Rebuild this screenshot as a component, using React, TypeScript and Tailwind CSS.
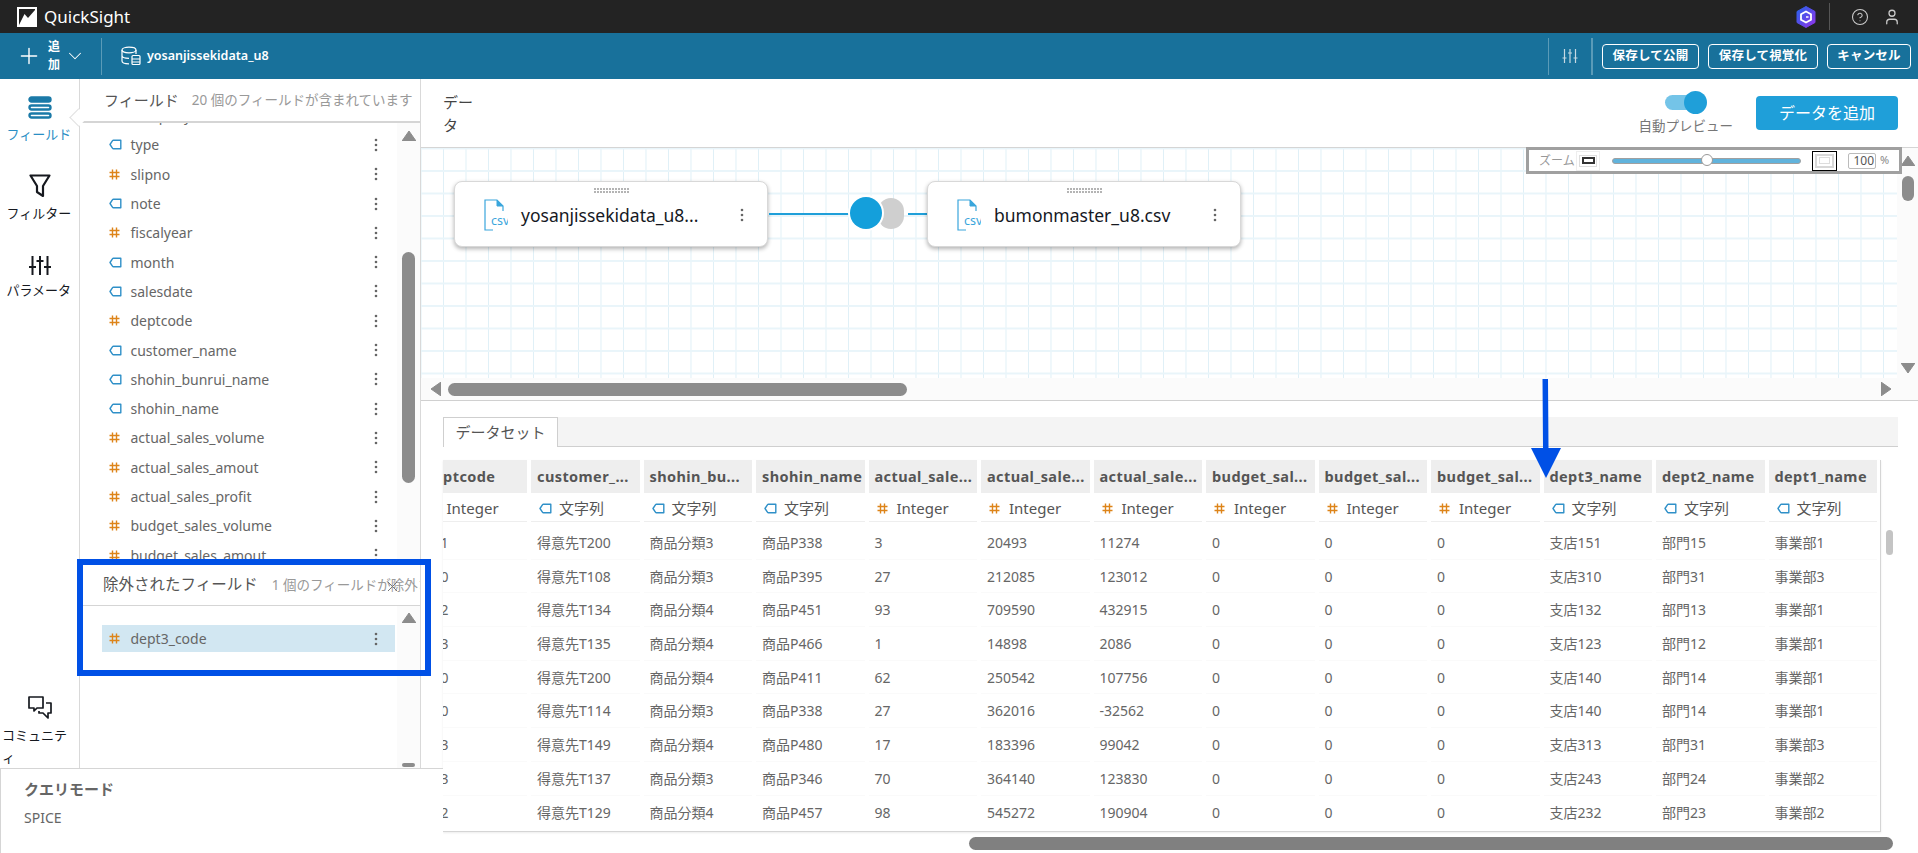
import { Plus, ChevronDown, CircleHelp, User } from 'lucide-react'

const font = 'font-["Noto_Sans","Noto_Sans_CJK_JP",sans-serif]'

const fields: { name: string; kind: 's' | 'n' }[] = [
  { name: 'company', kind: 's' },
  { name: 'type', kind: 's' },
  { name: 'slipno', kind: 'n' },
  { name: 'note', kind: 's' },
  { name: 'fiscalyear', kind: 'n' },
  { name: 'month', kind: 's' },
  { name: 'salesdate', kind: 's' },
  { name: 'deptcode', kind: 'n' },
  { name: 'customer_name', kind: 's' },
  { name: 'shohin_bunrui_name', kind: 's' },
  { name: 'shohin_name', kind: 's' },
  { name: 'actual_sales_volume', kind: 'n' },
  { name: 'actual_sales_amout', kind: 'n' },
  { name: 'actual_sales_profit', kind: 'n' },
  { name: 'budget_sales_volume', kind: 'n' },
  { name: 'budget_sales_amout', kind: 'n' },
]

const columns: { head: string; kind: 's' | 'n' }[] = [
  { head: 'deptcode', kind: 'n' },
  { head: 'customer_...', kind: 's' },
  { head: 'shohin_bu...', kind: 's' },
  { head: 'shohin_name', kind: 's' },
  { head: 'actual_sale...', kind: 'n' },
  { head: 'actual_sale...', kind: 'n' },
  { head: 'actual_sale...', kind: 'n' },
  { head: 'budget_sal...', kind: 'n' },
  { head: 'budget_sal...', kind: 'n' },
  { head: 'budget_sal...', kind: 'n' },
  { head: 'dept3_name', kind: 's' },
  { head: 'dept2_name', kind: 's' },
  { head: 'dept1_name', kind: 's' },
]

const rows = [
  ['151', '得意先T200', '商品分類3', '商品P338', '3', '20493', '11274', '0', '0', '0', '支店151', '部門15', '事業部1'],
  ['310', '得意先T108', '商品分類3', '商品P395', '27', '212085', '123012', '0', '0', '0', '支店310', '部門31', '事業部3'],
  ['132', '得意先T134', '商品分類4', '商品P451', '93', '709590', '432915', '0', '0', '0', '支店132', '部門13', '事業部1'],
  ['123', '得意先T135', '商品分類4', '商品P466', '1', '14898', '2086', '0', '0', '0', '支店123', '部門12', '事業部1'],
  ['140', '得意先T200', '商品分類4', '商品P411', '62', '250542', '107756', '0', '0', '0', '支店140', '部門14', '事業部1'],
  ['140', '得意先T114', '商品分類3', '商品P338', '27', '362016', '-32562', '0', '0', '0', '支店140', '部門14', '事業部1'],
  ['313', '得意先T149', '商品分類4', '商品P480', '17', '183396', '99042', '0', '0', '0', '支店313', '部門31', '事業部3'],
  ['243', '得意先T137', '商品分類3', '商品P346', '70', '364140', '123830', '0', '0', '0', '支店243', '部門24', '事業部2'],
  ['232', '得意先T129', '商品分類4', '商品P457', '98', '545272', '190904', '0', '0', '0', '支店232', '部門23', '事業部2'],
]

function TagIcon() {
  return (
    <svg width="13" height="11" viewBox="0 0 13 11" fill="none" className="shrink-0">
      <path d="M1 5.5 3.6 1.6c.2-.3.4-.4.8-.4h7.4v8.6H4.4c-.4 0-.6-.1-.8-.4L1 5.5Z" stroke="#2f90c8" strokeWidth="1.4" strokeLinejoin="round" />
    </svg>
  )
}

function HashIcon() {
  return (
    <svg width="11" height="11" viewBox="0 0 11 11" fill="none" className="shrink-0">
      <path d="M3.5 .5v10M7.5 .5v10M.5 3.5h10M.5 7.5h10" stroke="#dd8419" strokeWidth="1.4" />
    </svg>
  )
}

function Kind({ kind }: { kind: 's' | 'n' }) {
  return kind === 's' ? <TagIcon /> : <HashIcon />
}

function Dots({ className }: { className?: string }) {
  return (
    <svg width="4" height="14" viewBox="0 0 4 14" className={className}>
      <circle cx="2" cy="2" r="1.3" fill="#666" />
      <circle cx="2" cy="7" r="1.3" fill="#666" />
      <circle cx="2" cy="12" r="1.3" fill="#666" />
    </svg>
  )
}

function Triangle({ dir = 'up' }: { dir?: 'up' | 'down' | 'left' | 'right' }) {
  const d = { up: 'M7 0 14 10H0Z', down: 'M0 0H14L7 10Z', left: 'M10 0V14L0 7Z', right: 'M0 0 10 7 0 14Z' }[dir]
  const v = dir === 'up' || dir === 'down'
  return (
    <svg width={v ? 14 : 10} height={v ? 10 : 14} viewBox={v ? '0 0 14 10' : '0 0 10 14'} className="shrink-0">
      <path d={d} fill="#8c8c8c" stroke="#8c8c8c" strokeWidth="1" strokeLinejoin="round" />
    </svg>
  )
}

function CsvIcon() {
  return (
    <svg width="24" height="32" viewBox="0 0 24 32" fill="none" className="shrink-0">
      <path d="M1 17V1h12l6 6v5" stroke="#3aa6dc" strokeWidth="1.2" />
      <path d="M13 1v6h6Z" fill="#3aa6dc" stroke="#3aa6dc" />
      <path d="M1 17v14h8" stroke="#3aa6dc" strokeWidth="1.2" />
      <text x="7" y="26" fontSize="12.5" fill="#3aa6dc" fontFamily="Noto Sans">csv</text>
    </svg>
  )
}

function Handle() {
  return (
    <div className="grid grid-cols-[repeat(12,2px)] gap-px w-fit mx-auto pt-[6px]">
      {Array.from({ length: 24 }).map((_, i) => (
        <span key={i} className="w-[2px] h-[2px] bg-[#b4b4b4]" />
      ))}
    </div>
  )
}

function NodeCard({ name, className }: { name: string; className: string }) {
  return (
    <div className={`absolute top-[33px] w-[314px] h-[66px] rounded-lg bg-white border border-[#d8d8d8] shadow-[0_2px_4px_rgba(0,0,0,0.3)] ${className}`}>
      <Handle />
      <div className="flex items-center pl-[29px] pr-[23px] mt-[6px]">
        <CsvIcon />
        <span className="ml-[13px] text-[17.5px] text-[#16191f] whitespace-nowrap flex-1">{name}</span>
        <Dots />
      </div>
    </div>
  )
}

function FieldRow({ name, kind, active }: { name: string; kind: 's' | 'n'; active?: boolean }) {
  return (
    <div className={`flex items-center ml-[22px] w-[293px] pl-[7px] pr-[17px] ${active ? 'h-[27px] bg-[#d2e7f2]' : 'h-[29.3px] shrink-0'}`}>
      <span className="w-[21.5px] flex"><Kind kind={kind} /></span>
      <span className="text-[14px] text-[#666] flex-1">{name}</span>
      <Dots />
    </div>
  )
}

function RailItem({ label, active, children, className = '' }: { label: string; active?: boolean; children: React.ReactNode; className?: string }) {
  return (
    <div className={`flex flex-col items-center ${className}`}>
      {children}
      <span className={`w-[66px] text-[13px] leading-[22px] mt-[4px] ${active ? 'text-[#2a8ec4]' : 'text-[#16191f]'}`}>{label}</span>
    </div>
  )
}

export default function App() {
  return (
    <div className={`${font} relative w-[1918px] h-[853px] overflow-hidden bg-white flex flex-col`}>
      {/* top bar */}
      <div className="h-[33px] bg-[#232323] flex items-center shrink-0">
        <svg width="20" height="20" viewBox="0 0 20 20" className="ml-[17px]">
          <rect width="20" height="20" fill="#fff" />
          <path d="M2 2h16v1L11 11 7.500 7 2 18Z" fill="#232323" />
        </svg>
        <span className="ml-[7px] text-[17px] text-white">QuickSight</span>
        <svg width="20" height="22" viewBox="0 0 20 22" className="ml-auto">
          <defs>
            <linearGradient id="hx" x1="0" y1="0" x2="1" y2="1">
              <stop offset="0" stopColor="#2563eb" />
              <stop offset="1" stopColor="#9333ea" />
            </linearGradient>
          </defs>
          <path d="M10 .5 19 5.500v11L10 21.500 1 16.500v-11Z" fill="url(#hx)" stroke="url(#hx)" strokeLinejoin="round" />
          <path d="M10 5.500 15 8.300v5.400L10 16.500 5 13.700V8.300Z" fill="none" stroke="#fff" strokeWidth="1.800" />
          <path d="M10 11h2.500" stroke="#fff" strokeWidth="1.500" />
        </svg>
        <div className="w-px h-[27px] bg-[#555] ml-[13px]" />
        <CircleHelp size={18} strokeWidth={1.4} className="text-[#ccc] ml-[21px]" />
        <User size={18} strokeWidth={1.7} className="text-[#ccc] ml-[14px] mr-[17px]" />
      </div>

      {/* toolbar */}
      <div className="h-[46px] bg-[#18719b] flex items-center shrink-0 text-white">
        <Plus size={26} strokeWidth={1.3} className="ml-[16px]" />
        <span className="ml-[5px] w-[14px] text-[12px] leading-[18px] font-bold text-center">追加</span>
        <ChevronDown size={22} strokeWidth={1.1} className="ml-[2.500px]" />
        <div className="w-px h-[37px] bg-[#5a9bb8] ml-[15.500px]" />
        <svg width="20" height="20" viewBox="0 0 20 20" fill="none" stroke="#fff" strokeWidth="1.2" className="ml-[19px]">
          <ellipse cx="8" cy="4" rx="7" ry="2.8" />
          <path d="M1 4v11c0 1.5 3 2.8 7 2.8M1 9.500c0 1.500 3 2.800 7 2.800M15 4v4" />
          <rect x="11" y="9.500" width="8" height="9" rx="1" />
          <path d="M11 13h8M11 16h8" />
        </svg>
        <span className="ml-[6px] text-[12.500px] font-semibold">yosanjissekidata_u8</span>
        <div className="ml-auto w-px h-[37px] bg-[#5a9bb8]" />
        <svg width="16" height="14" viewBox="0 0 16 14" fill="none" stroke="#c6d9e3" strokeWidth="1.2" className="mx-[13px]">
          <path d="M2.500 0v14M8 0v14M13.500 0v14M.5 9h4M6 4h4M11.500 9h4" />
        </svg>
        <div className="w-[2px] h-[37px] bg-[#5a9bb8]" />
        <button className="ml-[9px] w-[97px] h-[25px] rounded border border-white text-[12.5px] font-bold tracking-[0.2px]">保存して公開</button>
        <button className="ml-[9px] w-[110px] h-[25px] rounded border border-white text-[12.5px] font-bold tracking-[0.2px]">保存して視覚化</button>
        <button className="ml-[9px] w-[84px] h-[25px] rounded border border-white text-[12.5px] font-bold tracking-[0.2px] mr-[7px]">キャンセル</button>
      </div>

      <div className="flex flex-1 min-h-0">
        {/* rail */}
        <div className="relative w-[80px] h-[689px] border-r border-[#d9d9d9] shrink-0 flex flex-col pt-[17px]">
          <RailItem label="フィールド" active>
            <svg width="24" height="23" viewBox="0 0 24 23" fill="none" stroke="#1b7aa8" strokeWidth="2.4">
              <rect x="1.500" y="1.500" width="21" height="4" rx="2" fill="#1b7aa8" />
              <rect x="1.500" y="9.500" width="21" height="4" rx="2" />
              <rect x="1.500" y="17.500" width="21" height="4" rx="2" />
            </svg>
          </RailItem>
          <RailItem label="フィルター" className="mt-[29px]">
            <svg width="22" height="24" viewBox="0 0 22 24" fill="none" stroke="#16191f" strokeWidth="2.200" strokeLinejoin="round">
              <path d="M1.500 1.500h19L14 12v10l-6-4v-6Z" />
            </svg>
          </RailItem>
          <RailItem label="パラメータ" className="mt-[32px]">
            <svg width="22" height="19" viewBox="0 0 22 19" fill="none" stroke="#16191f" strokeWidth="2">
              <path d="M3.500 0v19M11 0v19M18.500 0v19M0 11h7M7.500 5h7M15 11h7" />
            </svg>
          </RailItem>
          <RailItem label="コミュニティ" className="mt-auto items-start! pl-[2px]">
            <svg width="24" height="24" viewBox="0 0 24 24" fill="none" stroke="#16191f" strokeWidth="1.7" strokeLinejoin="round" className="ml-[26px]">
              <path d="M1 1h14v11H9l-3 3v-3H1Z" />
              <path d="M18 7h5v10h-3v5l-5-5h-4v-2" />
            </svg>
          </RailItem>
          <div className="absolute right-[-1px] top-[32px] w-[13px] h-[13px] bg-white border-l border-b border-[#e0e0e0] rotate-45 translate-x-[5px]" />
        </div>

        {/* fields panel */}
        <div className="w-[341px] h-[689px] shrink-0 border-r border-[#d9d9d9] flex flex-col overflow-hidden">
          <div className="h-[44px] shrink-0 border-b-2 border-[#d5d5d5] flex items-center pl-[24px] whitespace-nowrap">
            <span className="text-[15px] text-[#555]">フィールド</span>
            <span className="ml-[13px] text-[13.500px] text-[#999]">20 個のフィールドが含まれています</span>
          </div>
          <div className="h-[442px] shrink-0 flex overflow-hidden">
            <div className="flex-1 flex flex-col -mt-[22px]">
              {fields.map(f => <FieldRow key={f.name} name={f.name} kind={f.kind} />)}
            </div>
            <div className="w-[23px] shrink-0 bg-[#fbfbfb] flex flex-col items-center pt-[8px]">
              <Triangle />
              <div className="mt-[111px] w-[13px] h-[231px] rounded-full bg-[#8c8c8c]" />
            </div>
          </div>
          <div className="flex-1 flex flex-col min-h-0">
            <div className="relative h-[41px] shrink-0 border-b border-[#d5d5d5] flex items-center pl-[23px] whitespace-nowrap overflow-hidden">
              <span className="shrink-0 text-[15.500px] text-[#555]">除外されたフィールド</span>
              <span className="shrink-0 ml-[14px] text-[13.500px] text-[#999]">1 個のフィールドが除外されています</span>
              <svg width="11" height="11" viewBox="0 0 11 11" className="absolute left-[307px] top-[16px]">
                <path d="M1 1l9 9M10 1l-9 9" stroke="#777" strokeWidth="1" />
              </svg>
            </div>
            <div className="flex flex-1">
              <div className="flex-1 pt-[19px]">
                <FieldRow name="dept3_code" kind="n" active />
              </div>
              <div className="w-[23px] shrink-0 bg-[#fbfbfb] flex flex-col items-center pt-[7px]">
                <Triangle />
                <div className="mt-auto mb-px w-[13px] h-[4px] rounded-full bg-[#8c8c8c]" />
              </div>
            </div>
          </div>
        </div>

        {/* main */}
        <div className="flex-1 min-w-0 flex flex-col">
          <div className="h-[69px] shrink-0 border-b border-[#d5d5d5] flex">
            <span className="ml-[22px] mt-[12px] w-[30px] text-[15px] leading-[23px] text-[#444]">データ</span>
            <div className="ml-auto mt-[13px] flex flex-col items-center">
              <div className="relative w-[42px] h-[21px] flex items-center">
                <div className="w-[38px] h-[15px] rounded-full bg-[#74c4e8]" />
                <div className="absolute right-0 w-[23px] h-[23px] rounded-full bg-[#1f9fd9]" />
              </div>
              <span className="mt-[3px] text-[13.500px] text-[#777]">自動プレビュー</span>
            </div>
            <button className="mt-[17px] ml-[23px] mr-[20px] w-[142px] h-[34px] rounded-sm bg-[#1f9fd9] text-white text-[16px]">データを追加</button>
          </div>

          <div className="h-[253px] shrink-0 border-b border-[#d0d0d0] flex">
            <div className="flex-1 min-w-0 flex flex-col">
              <div className="relative flex-1 bg-[linear-gradient(#e9f5fa_2px,transparent_2px),linear-gradient(90deg,#e0f0f7_1px,transparent_1px)] bg-size-[22.5px_22.5px] bg-position-[22px_22px]">
                <NodeCard name="yosanjissekidata_u8..." className="left-[33px]" />
                <div className="absolute left-[348px] top-[65px] w-[80px] h-[2px] bg-[#1f9fd9]" />
                <div className="absolute left-[487px] top-[65px] w-[19px] h-[2px] bg-[#1f9fd9]" />
                <div className="absolute left-[457px] top-[50px] w-[26px] h-[31px] rounded-full bg-[#cfcfcf]" />
                <div className="absolute left-[429px] top-[49px] w-[32px] h-[32px] rounded-full bg-[#149fdb] ring-2 ring-white" />
                <NodeCard name="bumonmaster_u8.csv" className="left-[506px]" />
                <div className="absolute left-[1105px] -top-px w-[376px] h-[27px] border-[3px] border-[#a0a0a0] bg-white flex items-center pl-[10px]">
                  <span className="text-[12px] text-[#999] w-[34px] whitespace-nowrap">ズーム</span>
                  <div className="ml-[3px] w-[24px] h-[20px] border border-[#eee] flex items-center justify-center">
                    <div className="w-[18px] h-[12px] border border-[#ddd] flex items-center justify-center">
                      <div className="w-[13px] h-[7px] border-2 border-[#333]" />
                    </div>
                  </div>
                  <div className="relative ml-[12px] w-[189px] h-[6px] rounded-full bg-[#61b3dc] border border-[#a0a0a0]">
                    <div className="absolute left-[88px] -top-[5px] w-[12px] h-[12px] rounded-full bg-white border border-[#999]" />
                  </div>
                  <div className="ml-[11px] w-[25px] h-[20px] border border-black flex items-center justify-center">
                    <div className="w-[19px] h-[14px] border-2 border-[#d8d8d8] flex items-center justify-center">
                      <div className="w-[11px] h-[7px] border border-[#ddd]" />
                    </div>
                  </div>
                  <div className="ml-[11px] w-[28px] h-[16px] border border-[#bbb] rounded-[2px] text-[12px] leading-[14px] text-right pr-px text-[#555]">100</div>
                  <span className="ml-[4px] text-[11px] text-[#888]">%</span>
                </div>
              </div>
              <div className="h-[22px] shrink-0 bg-[#fbfbfb] flex items-center pl-[10px]">
                <Triangle dir="left" />
                <div className="ml-[7px] w-[459px] h-[13px] rounded-full bg-[#8c8c8c]" />
                <div className="ml-auto mr-[6px]"><Triangle dir="right" /></div>
              </div>
            </div>
            <div className="w-[21px] shrink-0 bg-[#fbfbfb] flex flex-col items-center pt-[8px]">
              <Triangle />
              <div className="mt-[10px] w-[12px] h-[25px] rounded-full bg-[#8c8c8c]" />
              <div className="mt-[162px]"><Triangle dir="down" /></div>
            </div>
          </div>

          {/* dataset preview */}
          <div className="flex-1 min-h-0 pl-[22px] pt-[16px] flex flex-col">
            <div className="h-[30px] w-[1455px] shrink-0 bg-[#f4f4f4] border-b border-[#cfcfcf] flex">
              <div className="w-[115px] h-[30px] bg-white border border-b-0 border-[#cfcfcf] text-[15px] text-[#555] flex items-center justify-center">データセット</div>
            </div>
            <div className="flex mt-[13px]">
              <div className="w-[1438px] h-[372px] overflow-hidden border-r border-b border-[#d5d5d5] shadow-[0_1px_2px_rgba(0,0,0,0.08)]">
                <div className="flex gap-[4px] -ml-[24.500px] w-max">
                  {columns.map((c, i) => (
                    <div key={i} className="w-[108.500px] shrink-0">
                      <div className="h-[33px] bg-[#eee] flex items-center pl-[6px] text-[14.500px] tracking-[0.4px] font-bold text-[#555] whitespace-nowrap overflow-hidden">{c.head}</div>
                      <div className="h-[29px] flex items-center pl-[8px] pt-[3px] border-b border-[#eee] text-[15px] text-[#555]">
                        <span className="w-[20px] flex"><Kind kind={c.kind} /></span>
                        {c.kind === 's' ? '文字列' : 'Integer'}
                      </div>
                      <div className="pt-[4px]">
                        {rows.map((r, j) => (
                          <div key={j} className="h-[33.700px] flex items-center pl-[6px] text-[14px] text-[#666] border-b border-[#fafafa] last:border-b-0">{r[i]}</div>
                        ))}
                      </div>
                    </div>
                  ))}
                </div>
              </div>
              <div className="ml-[5px] mt-[70px] w-[7px] h-[25px] rounded-full bg-[#c4c4c4]" />
            </div>
            <div className="h-[21px] w-[1450px] shrink-0 flex items-start justify-end pt-[5px]">
              <div className="w-[924px] h-[13px] rounded-full bg-[#808080]" />
            </div>
          </div>
        </div>
      </div>

      {/* query mode popover */}
      <div className="absolute left-0 bottom-0 w-[443px] h-[85px] bg-white border-t border-l border-[#d5d5d5] pl-[23px] pt-[9px]">
        <div className="text-[15px] font-bold text-[#666]">クエリモード</div>
        <div className="mt-[6px] text-[14px] text-[#666]">SPICE</div>
      </div>

      {/* annotations */}
      <div className="absolute left-[77px] top-[559px] w-[354px] h-[117px] border-[6px] border-[#0050e6]" />
      <svg width="30" height="100" viewBox="0 0 30 100" className="absolute left-[1531px] top-[379px]">
        <path d="M11.500 0h5.500l.5 69H30L15 99 0 69h12Z" fill="#0050e6" />
      </svg>
    </div>
  )
}
